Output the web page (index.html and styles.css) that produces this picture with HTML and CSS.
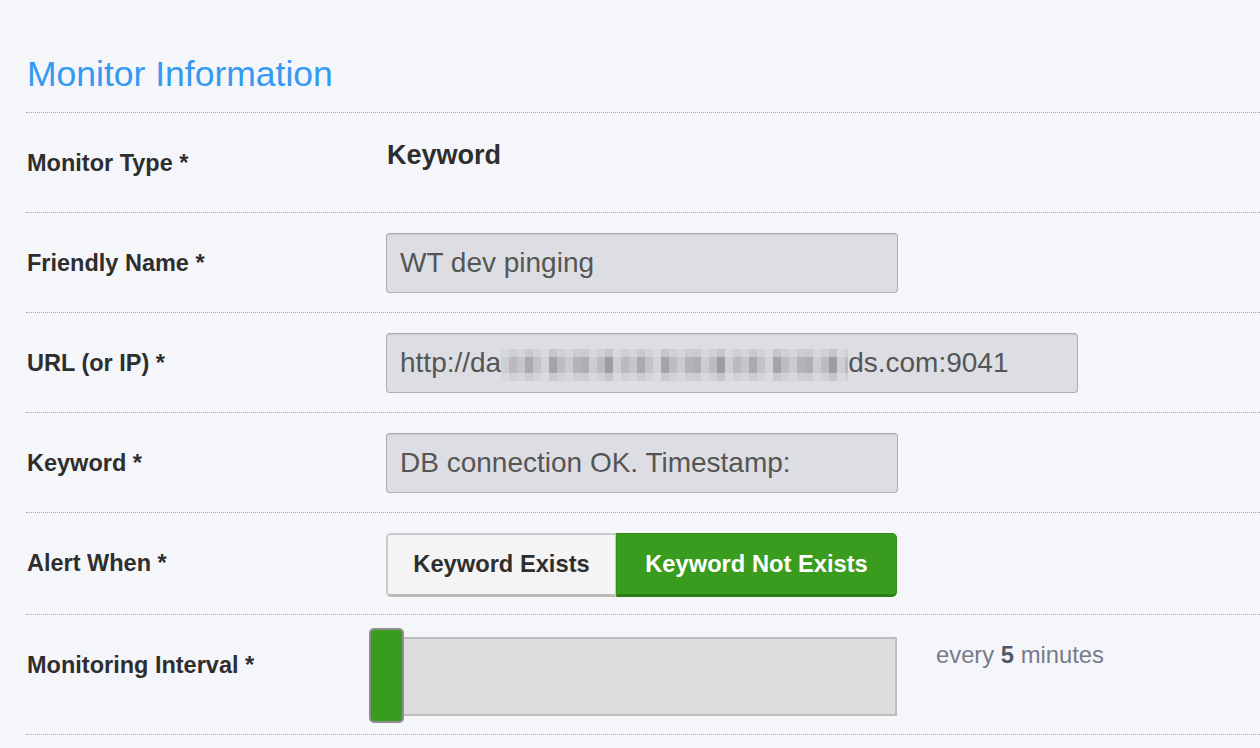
FILE: index.html
```html
<!DOCTYPE html>
<html>
<head>
<meta charset="utf-8">
<link rel="stylesheet" href="styles.css">
</head>
<body>
<div class="page">
  <h2 class="title">Monitor Information</h2>
  <div class="form">
    <div class="row">
      <div class="label">Monitor Type *</div>
      <div class="control"><span class="static">Keyword</span></div>
    </div>
    <div class="row">
      <div class="label">Friendly Name *</div>
      <div class="control"><div class="input w-512">WT dev pinging</div></div>
    </div>
    <div class="row">
      <div class="label">URL (or IP) *</div>
      <div class="control"><div class="input w-692">http://da<span class="blur"></span>ds.com:9041</div></div>
    </div>
    <div class="row">
      <div class="label">Keyword *</div>
      <div class="control"><div class="input w-512">DB connection OK. Timestamp:</div></div>
    </div>
    <div class="row row-alert">
      <div class="label">Alert When *</div>
      <div class="control">
        <div class="btn-group">
          <div class="btn btn-off">Keyword Exists</div>
          <div class="btn btn-on">Keyword Not Exists</div>
        </div>
      </div>
    </div>
    <div class="row row-interval">
      <div class="label">Monitoring Interval *</div>
      <div class="control">
        <div class="slider">
          <div class="handle"></div>
        </div>
        <div class="interval-text">every <b>5</b> minutes</div>
      </div>
    </div>
  </div>
</div>
</body>
</html>
```

FILE: styles.css
```css
html, body {
  margin: 0;
  padding: 0;
  background: #f5f6fa;
}
body {
  font-family: "Liberation Sans", Arial, Helvetica, sans-serif;
  color: #333;
}
.page {
  padding: 54px 0 0 26px;
}
.title {
  margin: 0 0 18px 1px;
  font-size: 35.5px;
  line-height: 40px;
  font-weight: normal;
  color: #3399f3;
}
.form {
  border-top: 1px dotted #a6a6a6;
}
.row {
  display: flex;
  align-items: flex-start;
  padding: 20px 0 19px;
  border-bottom: 1px dotted #a6a6a6;
}
.label {
  width: 359px;
  padding-left: 1px;
  flex: none;
  font-size: 23.5px;
  font-weight: bold;
  line-height: 60px;
  color: #2e2e2e;
}
.control {
  display: flex;
  align-items: flex-start;
  min-height: 60px;
}
.static {
  display: block;
  margin: 7px 0 0 1px;
  font-size: 27px;
  line-height: 30px;
  font-weight: bold;
  color: #2e2e2e;
}
.input {
  box-sizing: border-box;
  height: 60px;
  display: flex;
  align-items: center;
  padding-left: 13px;
  background: #dddee3;
  border: 1px solid #acaebd;
  border-top-color: #a3a5b6;
  border-radius: 4px;
  box-shadow: inset 0 1px 1px rgba(0, 0, 0, 0.08);
  font-size: 28px;
  color: #555;
  white-space: nowrap;
}
.w-512 { width: 512px; }
.w-692 { width: 692px; }
.blur {
  display: inline-block;
  width: 347px;
  height: 32px;
  margin-top: 4px;
  background:
    linear-gradient(180deg, rgba(221,222,227,0.6) 0 8px, rgba(221,222,227,0) 8px 24px, rgba(221,222,227,0.65) 24px 32px),
    repeating-linear-gradient(90deg,
      #cfcfd3 0 8px, #b9b9be 8px 16px, #c6c6ca 16px 24px, #a9a9ae 24px 32px,
      #c2c2c6 32px 40px, #d3d3d7 40px 48px, #a3a3a9 48px 56px, #bdbdc1 56px 64px,
      #cbcbcf 64px 72px, #b3b3b8 72px 80px, #aeaeb3 80px 88px, #cdcdd1 88px 96px,
      #bbbbc0 96px 104px, #9c9ca2 104px 112px);
}
.btn-group {
  display: flex;
  height: 64px;
}
.btn {
  box-sizing: border-box;
  display: flex;
  align-items: center;
  justify-content: center;
  font-size: 23.7px;
  font-weight: bold;
}
.btn-off {
  width: 230px;
  background: #f4f4f4;
  color: #2e2e2e;
  border: 2px solid #c9c9c9;
  border-bottom: 3px solid #bcbcbc;
  border-right: 1px solid #c9c9c9;
  border-radius: 5px 0 0 5px;
}
.btn-on {
  width: 281px;
  background: #3a9c1f;
  color: #fff;
  border: 1px solid #338d1a;
  border-bottom: 3px solid #2d7c17;
  border-radius: 0 5px 5px 0;
}
.row-alert {
  padding: 20px 0 17px;
}
.row-interval {
  padding: 22px 0 18px;
}
.row-interval .label {
  line-height: 56px;
}
.slider {
  position: relative;
  box-sizing: border-box;
  width: 511px;
  height: 79px;
  background: #dddddd;
  border: 2px solid #bdbdbd;
}
.handle {
  position: absolute;
  left: -19px;
  top: -11px;
  box-sizing: border-box;
  width: 35px;
  height: 95px;
  background: #3a9c1f;
  border: 2px solid #8e8e8e;
  border-radius: 5px;
}
.interval-text {
  margin: 3px 0 0 39px;
  font-size: 23.8px;
  line-height: 30px;
  color: #767a8b;
}
.interval-text b {
  color: #55586a;
}
```
